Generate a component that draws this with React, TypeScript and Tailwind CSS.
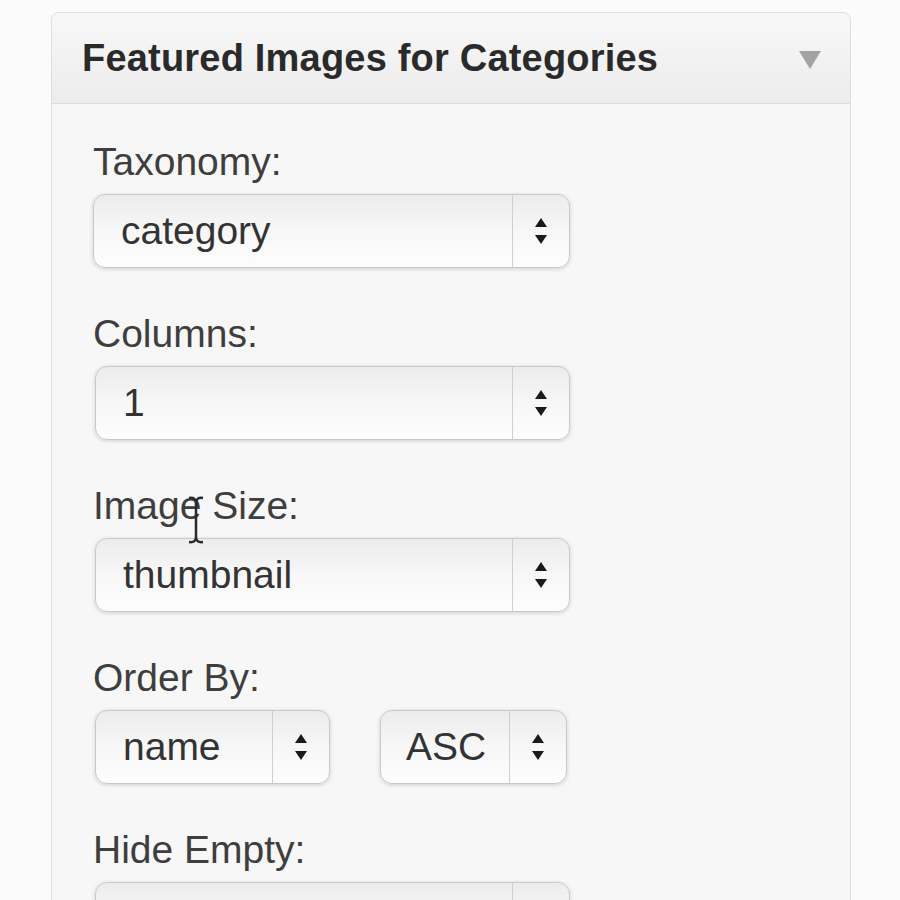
import { useState } from "react";

// ------------------ Types ------------------
interface FieldSelectProps {
  value: string;
  options: string[];
  width: string;
  textPad?: string;
  onChange: (v: string) => void;
}

// ------------------ Pieces ------------------
const UpDownArrows = () => (
  <svg width="14" height="28" viewBox="0 0 14 28" className="block">
    <polygon points="7,1 13,10 1,10" fill="#1a1a1a" />
    <polygon points="1,18 13,18 7,27" fill="#1a1a1a" />
  </svg>
);

const FieldSelect = ({ value, options, width, textPad = "pl-[27px]", onChange }: FieldSelectProps) => (
  <div
    className={`relative flex h-[74px] ${width} rounded-[12px] border border-[#c9c9c9] bg-gradient-to-b from-[#ececec] via-[#f7f7f7] to-[#fdfdfd] shadow-[0_1px_4px_rgba(0,0,0,0.16)]`}
  >
    <div className={`flex flex-1 items-center ${textPad} text-[39px] text-[#333]`}>{value}</div>
    <div className="flex w-[57px] items-center justify-center border-l border-[#cfcfcf]">
      <UpDownArrows />
    </div>
    <select
      value={value}
      onChange={(e) => onChange(e.target.value)}
      className="absolute inset-0 cursor-pointer opacity-0"
    >
      {options.map((o) => (
        <option key={o}>{o}</option>
      ))}
    </select>
  </div>
);

const Label = ({ children }: { children: string }) => (
  <label className="block text-[39px] leading-[44px] text-[#3e3e3e]">{children}</label>
);

// ------------------ Component ------------------
const App = () => {
  const [taxonomy, setTaxonomy] = useState("category");
  const [columns, setColumns] = useState("1");
  const [size, setSize] = useState("thumbnail");
  const [orderBy, setOrderBy] = useState("name");
  const [order, setOrder] = useState("ASC");
  const [hideEmpty, setHideEmpty] = useState("0");

  return (
    <div
      className="h-[900px] overflow-hidden bg-[#fbfbfb] pt-[12px] pl-[51px]"
      style={{ fontFamily: '"Liberation Sans", Arial, sans-serif' }}
    >
      <div className="w-[800px] rounded-t-[8px] border border-[#dedede] bg-[#f7f7f7]">
        {/* Header */}
        <div className="flex h-[91px] items-center justify-between rounded-t-[8px] border-b border-[#dcdcdc] bg-gradient-to-b from-[#f8f8f8] to-[#ececec] pl-[30px] pr-[28px]">
          <h3 className="text-[38px] font-bold tracking-[0.2px] text-[#2a2a2a]">
            Featured Images for Categories
          </h3>
          <svg width="24" height="20" viewBox="0 0 24 20" className="mt-[4px]">
            <polygon points="1,1 23,1 12,19" fill="#a3a3a3" />
          </svg>
        </div>

        {/* Body */}
        <div className="relative flex flex-col pt-[36px] pl-[41px]">
          <Label>Taxonomy:</Label>
          <div className="mt-[10px]">
            <FieldSelect value={taxonomy} options={["category", "post_tag"]} width="w-[477px]" onChange={setTaxonomy} />
          </div>

          <div className="mt-[44px]">
            <Label>Columns:</Label>
          </div>
          <div className="mt-[10px] pl-[2px]">
            <FieldSelect value={columns} options={["1", "2", "3", "4"]} width="w-[475px]" onChange={setColumns} />
          </div>

          <div className="mt-[44px]">
            <Label>Image Size:</Label>
          </div>
          <div className="mt-[10px] pl-[2px]">
            <FieldSelect value={size} options={["thumbnail", "medium", "large", "full"]} width="w-[475px]" onChange={setSize} />
          </div>

          <div className="mt-[44px]">
            <Label>Order By:</Label>
          </div>
          <div className="mt-[10px] flex gap-[50px] pl-[2px]">
            <FieldSelect value={orderBy} options={["name", "id", "count", "slug"]} width="w-[235px]" onChange={setOrderBy} />
            <FieldSelect value={order} options={["ASC", "DESC"]} width="w-[187px]" textPad="pl-[25px]" onChange={setOrder} />
          </div>

          <div className="mt-[44px]">
            <Label>Hide Empty:</Label>
          </div>
          <div className="mt-[10px] pl-[2px]">
            <FieldSelect value={hideEmpty} options={["0", "1"]} width="w-[475px]" onChange={setHideEmpty} />
          </div>

          {/* text cursor over "Image Size" */}
          <svg
            width="22"
            height="50"
            viewBox="0 0 22 50"
            className="pointer-events-none absolute left-[133px] top-[391px]"
          >
            <path
              d="M4 3 Q11 2 11 8 Q11 2 18 3 M11 8 L11 42 M4 47 Q11 48 11 42 Q11 48 18 47"
              stroke="#2a2a2a"
              strokeWidth="2.5"
              fill="none"
            />
          </svg>
        </div>
      </div>
    </div>
  );
};

export default App;
